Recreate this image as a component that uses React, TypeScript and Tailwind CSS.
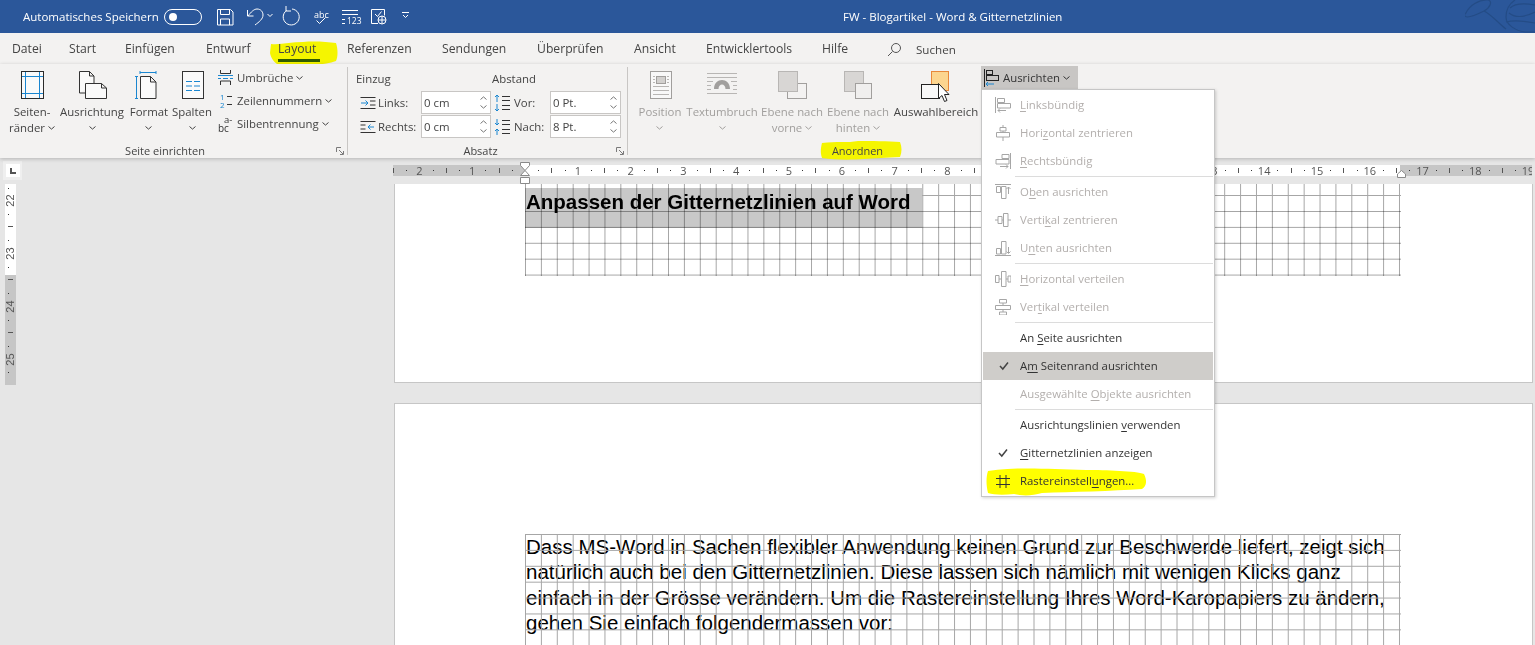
import type { ReactNode } from 'react';

const ui = 'font-["Open_Sans","Noto_Sans",sans-serif]';

function Chevron({ className = '' }: { className?: string }) {
  return (
    <svg className={`inline-block h-[4px] w-[7px] shrink-0 ${className}`} viewBox="0 0 7 4" fill="none" stroke="currentColor" strokeWidth="1">
      <path d="M.5.5l3 2.6 3-2.6" />
    </svg>
  );
}

/* ---------- title bar icons ---------- */
function QuickIcons() {
  return (
    <svg className="ml-[15px] h-[33px] w-[200px] shrink-0" viewBox="0 0 200 33" fill="none" stroke="#fff" strokeWidth="1">
      <path d="M.5 9.500h13l2.500 2.500v13H.5zM3.500 9.500v5h9v-5M3.500 25v-6h9v6" />
      <path d="M30.500 10v6h6M31 16c3-4 6-7 9-7 4 0 6 3 6 6 0 4-4 7-8 10" />
      <path d="M50.500 14l2.500 2.500 2.500-2.500" />
      <path d="M69.500 10.500A8 8 0 1 0 75 9M69 6v5h5" />
      <text x="97" y="17.500" fill="#fff" stroke="none" fontSize="9" fontFamily="Open Sans">abc</text>
      <path d="M99.500 20.500l3 3 6-6" />
      <path d="M125 10.500h16M125 14.500h16M125 19.500h3M125 23.500h3" />
      <text x="130" y="24" fill="#fff" stroke="none" fontSize="8.500" fontFamily="Open Sans">123</text>
      <path d="M161 23.500h-6.500v-14h13v6M158 14l2.500 2.500 4-5" />
      <circle cx="165" cy="20" r="4" fill="#2b579a" />
      <path d="M161 20h8M165 16v8" />
      <path d="M185 12.500h7M186 15l2.500 2.500 2.500-2.500" />
    </svg>
  );
}

function Scribble() {
  return (
    <svg className="absolute right-0 top-0 h-[33px] w-[70px]" viewBox="0 0 70 33" fill="none" stroke="#244c86" strokeWidth="1.200">
      <path d="M1 13c3-7 13-14 22-13 5 1 2 8-4 11-8 4-17 8-19 5-1-2 0-2 1-3M19 11c8 4 14 12 22 18" />
      <path d="M50 0c-6 4-9 10-9 17 0 8 10 14 19 15h10M45 8c5-5 14-5 25-3M44 13c6 5 16 4 26-1M41 22c8-2 18-1 29 1" />
    </svg>
  );
}

/* ---------- ribbon icons ---------- */
function MarginIcon() {
  return (
    <svg className="h-[28px] w-[23px]" viewBox="0 0 23 28" fill="none">
      <rect x=".5" y=".5" width="22" height="27" fill="#fafafa" stroke="#2b2b2b" />
      <path d="M4.500 1v26M18.500 1v26M1 5.500h21M1 22.500h21" stroke="#1a86d0" />
    </svg>
  );
}

function OrientationIcon() {
  return (
    <svg className="ml-[2px] h-[28px] w-[28px]" viewBox="0 0 28 28" fill="none" stroke="#333">
      <path d="M.5 22V.5h10l4.500 4.500V12M10.500.5v4.500H15M.5 22h6" fill="#fafafa" />
      <path d="M6.500 12.500h16l5 4.500v10.500h-21zM22.500 12.500v4.500h5" fill="#fafafa" />
    </svg>
  );
}

function SizeIcon() {
  return (
    <svg className="mr-[6px] h-[28px] w-[22px]" viewBox="0 0 22 28" fill="none">
      <path d="M5 1.500h16M5 0v3M21 0v3M1.500 5v23M0 5.500h3M0 27.500h3" stroke="#1a86d0" />
      <path d="M5.500 5.500h10l5.500 5.500v16.500h-15.500zM15.500 5.500v5.500h5.500" fill="#fafafa" stroke="#333" />
    </svg>
  );
}

function ColumnsIcon() {
  return (
    <svg className="ml-[1px] h-[28px] w-[22px]" viewBox="0 0 22 28" fill="none">
      <rect x=".5" y=".5" width="21" height="27" fill="#fafafa" stroke="#333" />
      <path d="M4 10.500h6M12 10.500h6M4 15h6M12 15h6M4 19.500h6M12 19.500h6" stroke="#1a86d0" />
    </svg>
  );
}

function BreaksIcon() {
  return (
    <svg className="h-[15px] w-[15px]" viewBox="0 0 15 15" fill="none">
      <path d="M2.500 0v3.500h10V0M2.500 15v-4h10v4" stroke="#333" />
      <path d="M0 5.500h15M0 8.500h3M5 8.500h5M12 8.500h3" stroke="#1a86d0" />
    </svg>
  );
}

function LineNumbersIcon() {
  return (
    <svg className="h-[17px] w-[15px]" viewBox="0 0 15 17" fill="none">
      <text x="2" y="8" fontSize="8" fill="#1a86d0" fontFamily="Open Sans">1</text>
      <text x="2" y="16" fontSize="8" fill="#1a86d0" fontFamily="Open Sans">2</text>
      <path d="M9 4.500h5M9 12.500h5" stroke="#333" />
    </svg>
  );
}

function HyphenIcon() {
  return (
    <svg className="h-[18px] w-[15px]" viewBox="0 0 15 18" fill="none">
      <text x="6" y="8" fontSize="9.500" fill="#333" fontFamily="Open Sans">a-</text>
      <text x="0" y="17" fontSize="10" fill="#333" fontFamily="Open Sans">bc</text>
    </svg>
  );
}

function IndentIcon({ right = false }: { right?: boolean }) {
  return (
    <svg className="h-[14px] w-[16px]" viewBox="0 0 16 14" fill="none">
      <path d={right ? 'M.5 1.500h15M.5 5h5M.5 9h5M.5 12.500h15' : 'M.5 1.500h15M10 5h5.500M10 9h5.500M.5 12.500h15'} stroke="#333" />
      <path d={right ? 'M14 7H8M10.500 4.500L8 7l2.500 2.500' : 'M1 7h7M5.500 4.500L8 7l-2.500 2.500'} stroke="#1a86d0" />
    </svg>
  );
}

function SpacingIcon({ after = false }: { after?: boolean }) {
  return (
    <svg className="h-[16px] w-[16px]" viewBox="0 0 16 16" fill="none">
      <path d="M8 1.500h8M8 5.500h8M8 10.500h8M8 14.500h8" stroke="#333" />
      <path d={after ? 'M3 0v6M1 4l2 2 2-2M3 16v-6M1 12l2-2 2 2' : 'M3 7V0M1 2l2-2 2 2M3 9v7M1 14l2 2 2-2'} stroke="#1a86d0" />
    </svg>
  );
}

function PositionIcon() {
  return (
    <svg className="ml-[2px] h-[28px] w-[22px]" viewBox="0 0 22 28" fill="none" stroke="#a19f9d">
      <rect x=".5" y=".5" width="21" height="27" fill="#f8f8f8" />
      <rect x="6.500" y="5.500" width="9" height="7" fill="#d2d0ce" />
      <path d="M3 5.500h2M3 8.500h2M3 11.500h2M17 5.500h2M17 8.500h2M17 11.500h2M3 15.500h16M3 19.500h16M3 23.500h16" stroke="#b8b6b4" />
    </svg>
  );
}

function WrapIcon() {
  return (
    <svg className="h-[28px] w-[30px]" viewBox="0 0 30 28" fill="none">
      <path d="M0 2.500h30M0 6.500h30M0 10.500h6M24 10.500h6M0 14.500h4M26 14.500h4M0 18.500h4M26 18.500h4M0 22.500h30" stroke="#b8b6b4" />
      <path d="M7 18c0-12 16-12 16 0h-4.500c0-6-7-6-7 0z" fill="#a19f9d" />
    </svg>
  );
}

function ForwardIcon() {
  return (
    <svg className="h-[28px] w-[29px]" viewBox="0 0 29 28" fill="none">
      <rect x="9.500" y="12.500" width="19" height="15" fill="#f3f2f1" stroke="#a19f9d" />
      <rect x=".5" y=".5" width="19" height="20" fill="#d8d6d4" stroke="#b8b6b4" />
    </svg>
  );
}

function BackwardIcon() {
  return (
    <svg className="h-[28px] w-[29px]" viewBox="0 0 29 28" fill="none">
      <rect x=".5" y=".5" width="19" height="20" fill="#d8d6d4" stroke="#b8b6b4" />
      <rect x="11.500" y="12.500" width="16" height="15" fill="#f0efee" stroke="#a19f9d" />
    </svg>
  );
}

function SelectionIcon() {
  return (
    <svg className="h-[31px] w-[31px]" viewBox="0 0 31 31" fill="none">
      <rect x="10.500" y=".5" width="17" height="19" fill="#fcd58f" stroke="#e8883a" />
      <rect x=".5" y="13.500" width="18" height="14" fill="#f8f8f8" stroke="#222" />
      <path d="M17.500 12.500v15l3.500-3 2.500 6 2.500-1-2.500-6h4.500z" fill="#fff" stroke="#222" />
    </svg>
  );
}

function AlignSmallIcon() {
  return (
    <svg className="h-[18px] w-[16px] shrink-0" viewBox="0 0 16 18" fill="none">
      <path d="M.5 0v18" stroke="#222" />
      <rect x="2.500" y="1.500" width="6" height="4" stroke="#222" />
      <rect x="2.500" y="6.500" width="12" height="5" stroke="#222" />
      <path d="M2 15h8M4 13l-2 2 2 2" stroke="#1a86d0" />
    </svg>
  );
}

function DialogLauncher({ className }: { className: string }) {
  return (
    <svg className={`absolute h-[8px] w-[8px] ${className}`} viewBox="0 0 8 8" fill="none" stroke="#7a7a7a">
      <path d="M.5 5V.5H5M3 3l4 4M7.500 4v3.500H4" />
    </svg>
  );
}

/* ---------- menu icons ---------- */
const menuIcons: Record<string, ReactNode> = {
  left: <path d="M.5 0v16M2.500 1.500h7v4h-7zM2.500 6.500h13v4.500h-13zM3 13.500h8M5 11.500l-2 2 2 2" />,
  hcenter: <path d="M8 0v2M8 6v1M8 12v4M5 2.500h6v3.500h-6zM1.500 7.500h13v4.500h-13z" />,
  right: <path d="M15.500 0v16M7 1.500h7v4h-7zM1 6.500h13v4.500h-13zM5 13.500h8M11 11.500l2 2-2 2" />,
  top: <path d="M0 .5h16M1.500 2.500h4v6h-4zM6.500 2.500h4.500v12h-4.500zM13.500 10v-7M11.500 5l2-2 2 2" />,
  vcenter: <path d="M0 8h3M7 8h1M13 8h3M3 4.500h4v7h-4zM8.500 1.500h4.500v13h-4.500z" />,
  bottom: <path d="M0 15.500h16M1.500 8.500h4v5.500h-4zM6.500 1.500h4.500v12.500h-4.500zM13.500 7v6M11.500 11.500l2 2 2-2" />,
  hdist: <path d="M.5 4.500h3.500v7h-3.500zM6.500 .5h4.500v15h-4.500zM13 5h3v6h-3zM4 8h2.500M11 8h2" />,
  vdist: <path d="M4.500 .5h7v3.500h-7zM.5 6.500h15v4h-15zM4.500 13h7v3h-7zM8 4v2.500M8 10.500v2.500" />,
};

type MenuEntry = {
  pre: string;
  u: string;
  post: string;
  off?: boolean;
  icon?: string;
  check?: boolean;
  active?: boolean;
  sep?: boolean;
};

const menu: MenuEntry[] = [
  { pre: '', u: 'L', post: 'inksbündig', off: true, icon: 'left' },
  { pre: 'Hori', u: 'z', post: 'ontal zentrieren', off: true, icon: 'hcenter' },
  { pre: '', u: 'R', post: 'echtsbündig', off: true, icon: 'right', sep: true },
  { pre: 'O', u: 'b', post: 'en ausrichten', off: true, icon: 'top' },
  { pre: 'Verti', u: 'k', post: 'al zentrieren', off: true, icon: 'vcenter' },
  { pre: 'U', u: 'n', post: 'ten ausrichten', off: true, icon: 'bottom', sep: true },
  { pre: '', u: 'H', post: 'orizontal verteilen', off: true, icon: 'hdist' },
  { pre: 'Ver', u: 't', post: 'ikal verteilen', off: true, icon: 'vdist', sep: true },
  { pre: 'An ', u: 'S', post: 'eite ausrichten' },
  { pre: 'A', u: 'm', post: ' Seitenrand ausrichten', check: true, active: true },
  { pre: 'Ausgewählte ', u: 'O', post: 'bjekte ausrichten', off: true, sep: true },
  { pre: 'Ausrichtungslinien ', u: 'v', post: 'erwenden' },
  { pre: '', u: 'G', post: 'itternetzlinien anzeigen', check: true },
  { pre: 'Rastereinstell', u: 'u', post: 'ngen...', icon: 'grid' },
];

function MenuIcon({ entry }: { entry: MenuEntry }) {
  if (entry.check) {
    return (
      <svg className="ml-[16px] h-[10px] w-[10px]" viewBox="0 0 10 10" fill="none" stroke="#444" strokeWidth="1.500">
        <path d="M1 5l2.800 3L9 1.500" />
      </svg>
    );
  }
  if (entry.icon === 'grid') {
    return (
      <svg className="ml-[14px] h-[13px] w-[14px]" viewBox="0 0 14 13" fill="none" stroke="#333">
        <path d="M4 0v13M10 0v13M0 3.500h14M0 9.500h14" />
      </svg>
    );
  }
  if (entry.icon) {
    return (
      <svg className="ml-[13px] h-[16px] w-[16px]" viewBox="0 0 16 16" fill="none" stroke="#a6a6a6">
        {menuIcons[entry.icon]}
      </svg>
    );
  }
  return null;
}

function AlignMenu() {
  return (
    <div className={`absolute left-[981px] top-[89px] z-20 w-[234px] border border-[#c6c6c6] bg-white py-px text-[11.400px] leading-none shadow-[1px_1px_3px_rgba(0,0,0,0.18)] ${ui}`}>
      <svg className="absolute left-[4px] top-[377px] h-[30px] w-[162px]" viewBox="0 0 162 30" preserveAspectRatio="none">
        <path d="M2 4C30 0 60 2 100 3c20 0 50 1 58 4 3 6 3 12-2 15-30 2-70 3-100 4-10 3-20 3-28 1-10 1-20 1-26-1C0 18 0 10 2 4z" fill="#ffff00" />
      </svg>
      {menu.map((item) => (
        <div key={item.pre + item.u + item.post}>
          <div className={`relative flex h-[28px] items-center ${item.active ? 'mx-px bg-[#cfcdca]' : ''} ${item.off ? 'text-[#b3afad]' : 'text-[#333]'}`}>
            <div className={`flex shrink-0 items-center ${item.active ? 'w-[37px]' : 'w-[38px]'}`}>
              <MenuIcon entry={item} />
            </div>
            <span className="whitespace-pre">
              {item.pre}
              <u className="underline-offset-2">{item.u}</u>
              {item.post}
            </span>
          </div>
          {item.sep && <div className="my-px ml-[33px] mr-px h-px bg-[#dcdcdc]" />}
        </div>
      ))}
    </div>
  );
}

/* ---------- ribbon parts ---------- */
function BigButton({ icon, lines, w, off, chevron, className = '' }: { icon: ReactNode; lines: string[]; w: string; off?: boolean; chevron?: boolean; className?: string }) {
  return (
    <div className={`flex shrink-0 flex-col items-center ${w} ${className} ${off ? 'text-[#a19f9d]' : 'text-[#444]'}`}>
      <div className="mt-[4px] flex h-[28px] items-start justify-center">{icon}</div>
      <div className="mt-[5px] whitespace-nowrap text-center text-[11.400px] leading-[16px]">
        {lines.map((line, i) => (
          <div key={line} className="flex h-[16px] items-center justify-center gap-[3px]">
            {line}
            {chevron && lines.length > 1 && i === lines.length - 1 && <Chevron />}
          </div>
        ))}
        {lines.length === 1 && chevron && (
          <div className="flex h-[16px] items-center justify-center">
            <Chevron />
          </div>
        )}
      </div>
    </div>
  );
}

function SmallButton({ icon, label }: { icon: ReactNode; label: string }) {
  return (
    <div className="flex h-[23px] items-center text-[11.400px] text-[#444]">
      <div className="flex w-[19px] shrink-0 items-center">{icon}</div>
      <span className="whitespace-nowrap">{label}</span>
      <Chevron className="ml-[3px]" />
    </div>
  );
}

function Spinner({ value, w }: { value: string; w: string }) {
  return (
    <div className={`flex h-[23px] shrink-0 items-center justify-between border border-[#c8c6c4] bg-white pl-[2px] pr-[3px] text-[11.400px] text-[#444] ${w}`}>
      <span>{value}</span>
      <div className="flex flex-col gap-[5px] text-[#777]">
        <Chevron className="rotate-180" />
        <Chevron />
      </div>
    </div>
  );
}

function GroupLabel({ children, className = '' }: { children: ReactNode; className?: string }) {
  return <div className={`absolute bottom-[-1px] left-0 right-0 text-center text-[11px] leading-[16px] text-[#444] ${className}`}>{children}</div>;
}

function Separator() {
  return <div className="h-[88px] w-px shrink-0 bg-[#c8c6c4]" />;
}

const tabs: [string, string][] = [
  ['Datei', 'w-[57px]'],
  ['Start', 'w-[56px]'],
  ['Einfügen', 'w-[81px]'],
  ['Entwurf', 'w-[72px]'],
  ['Layout', 'w-[69px]'],
  ['Referenzen', 'w-[95px]'],
  ['Sendungen', 'w-[95px]'],
  ['Überprüfen', 'w-[97px]'],
  ['Ansicht', 'w-[72px]'],
  ['Entwicklertools', 'w-[116px]'],
  ['Hilfe', 'w-[65px]'],
];

function Tabs() {
  return (
    <div className="relative flex h-[31px] items-center bg-[#f3f2f1] pl-[12px] pt-[2px] text-[12.200px] text-[#444]">
      <svg className="absolute left-[268px] top-[8px] h-[27px] w-[70px]" viewBox="0 0 70 27" preserveAspectRatio="none">
        <path d="M3 3c10 1 20-2 32-2 12-1 24 0 33 1 2 6 2 14 0 18-8 3-18 4-28 3-8 2-16 3-24 2C8 25 3 18 2 12z" fill="#f5f500" />
      </svg>
      {tabs.map(([name, w]) => (
        <div key={name} className={`relative shrink-0 whitespace-nowrap ${w}`}>
          {name}
          {name === 'Layout' && <div className="absolute left-0 top-[19px] h-[3px] w-[42px] bg-[#2f5b00]" />}
        </div>
      ))}
      <svg className="h-[15px] w-[15px] shrink-0" viewBox="0 0 15 15" fill="none" stroke="#555">
        <circle cx="9" cy="6" r="4.500" />
        <path d="M5.500 9.500L1 14" />
      </svg>
      <span className="ml-[14px] text-[11.600px]">Suchen</span>
    </div>
  );
}

function Ribbon() {
  return (
    <div className="relative z-10 flex h-[94px] bg-[#f3f2f1] pt-[3px] shadow-[0_1px_4px_rgba(0,0,0,0.22)]">
      <div className="relative flex h-[91px] w-[347px] shrink-0 pl-[2px]">
        <BigButton icon={<MarginIcon />} lines={['Seiten-', 'ränder']} w="w-[60px]" chevron />
        <BigButton icon={<OrientationIcon />} lines={['Ausrichtung']} w="w-[60px]" chevron />
        <BigButton icon={<SizeIcon />} lines={['Format']} w="w-[54px]" chevron />
        <BigButton icon={<ColumnsIcon />} lines={['Spalten']} w="w-[32px]" chevron />
        <div className="-mt-px ml-[10px] flex flex-col">
          <SmallButton icon={<BreaksIcon />} label="Umbrüche" />
          <SmallButton icon={<LineNumbersIcon />} label="Zeilennummern" />
          <SmallButton icon={<HyphenIcon />} label="Silbentrennung" />
        </div>
        <GroupLabel className="pr-[17px]">Seite einrichten</GroupLabel>
        <DialogLauncher className="bottom-[3px] right-[3px]" />
      </div>
      <Separator />
      <div className="relative flex h-[91px] w-[279px] shrink-0 flex-col pl-[8px] text-[11.400px] text-[#444]">
        <div className="flex h-[24px] items-center">
          <span className="w-[136px]">Einzug</span>
          <span>Abstand</span>
        </div>
        <div className="flex h-[24px] items-start">
          <div className="ml-[4px] flex h-[23px] w-[18px] shrink-0 items-center"><IndentIcon /></div>
          <div className="flex h-[23px] w-[43px] shrink-0 items-center">Links:</div>
          <Spinner value="0 cm" w="w-[70px]" />
          <div className="ml-[3px] flex h-[23px] w-[20px] shrink-0 items-center"><SpacingIcon /></div>
          <div className="flex h-[23px] w-[36px] shrink-0 items-center">Vor:</div>
          <Spinner value="0 Pt." w="w-[71px]" />
        </div>
        <div className="flex h-[24px] items-start">
          <div className="ml-[4px] flex h-[23px] w-[18px] shrink-0 items-center"><IndentIcon right /></div>
          <div className="flex h-[23px] w-[43px] shrink-0 items-center">Rechts:</div>
          <Spinner value="0 cm" w="w-[70px]" />
          <div className="ml-[3px] flex h-[23px] w-[20px] shrink-0 items-center"><SpacingIcon after /></div>
          <div className="flex h-[23px] w-[36px] shrink-0 items-center">Nach:</div>
          <Spinner value="8 Pt." w="w-[71px]" />
        </div>
        <GroupLabel className="pr-[14px]">Absatz</GroupLabel>
        <DialogLauncher className="bottom-[3px] right-[3px]" />
      </div>
      <Separator />
      <div className="relative flex h-[91px] w-[459px] shrink-0">
        <svg className="absolute left-[192px] top-[73px] h-[20px] w-[82px]" viewBox="0 0 82 20" preserveAspectRatio="none">
          <path d="M2 3c14-2 26 0 36-2 14 0 30 0 42 1 2 5 2 10 0 15-14 1-24 1-36 2-12 1-30 1-42-1C0 12 1 7 2 3z" fill="#f5f500" />
        </svg>
        <BigButton icon={<PositionIcon />} lines={['Position']} w="w-[64px]" off chevron />
        <BigButton icon={<WrapIcon />} lines={['Textumbruch']} w="w-[60px]" off chevron />
        <BigButton icon={<ForwardIcon />} lines={['Ebene nach', 'vorne']} w="w-[66px]" className="ml-[7px]" off chevron />
        <BigButton icon={<BackwardIcon />} lines={['Ebene nach', 'hinten']} w="w-[66px]" off chevron />
        <BigButton icon={<SelectionIcon />} lines={['Auswahlbereich']} w="w-[90px]" />
        <div className="-mt-px flex h-[23px] w-[97px] shrink-0 items-center bg-[#c8c6c4] pl-[3px] text-[11.400px] text-[#333]">
          <AlignSmallIcon />
          <span className="ml-[3px]">Ausrichten</span>
          <Chevron className="ml-[3px]" />
        </div>
        <div className="ml-[9px] h-[22px] w-px bg-[#c8c6c4]" />
        <GroupLabel>Anordnen</GroupLabel>
      </div>
    </div>
  );
}

/* ---------- rulers ---------- */
const hNumbers = ['2', '1', '', ...Array.from({ length: 19 }, (_, i) => String(i + 1))];
const vNumbers = ['22', '23', '24', '25'];

function RulerCell({ n }: { n: string }) {
  return (
    <div className="relative flex h-[11px] w-[52.800px] shrink-0 items-center justify-center text-[11px] leading-none text-[#555]">
      <span className="absolute left-0 top-[3px] h-[5px] w-px bg-[#555]" />
      <span className="absolute left-1/4 top-[5px] h-px w-px bg-[#333]" />
      <span className="absolute left-3/4 top-[5px] h-px w-px bg-[#333]" />
      {n}
    </div>
  );
}

function TopRuler() {
  return (
    <div className="relative flex h-[26px] bg-[#e6e6e6] pt-[7px]">
      <div className="-mt-[4px] ml-[3px] flex h-[19px] w-[19px] shrink-0 items-center justify-center bg-[#efefef]">
        <div className="flex h-[13px] w-[14px] items-center justify-center bg-white">
          <div className="h-[6px] w-[6px] border-b-2 border-l-2 border-[#555]" />
        </div>
      </div>
      <div className="ml-[371px] flex h-[11px] w-[1139px] shrink-0 overflow-hidden bg-[linear-gradient(90deg,#c6c6c6_132px,#fff_132px,#fff_1007px,#c6c6c6_1007px)]">
        {hNumbers.map((n, i) => (
          <RulerCell key={i} n={n} />
        ))}
      </div>
      <svg className="absolute left-[520px] top-[4px] h-[22px] w-[10px]" viewBox="0 0 10 22" fill="#fff" stroke="#8a8a8a">
        <path d="M.5.5h9v3L5 8.500l4.500 5H.5l4.500-5-4.500-5zM.5 15.500h9v6h-9z" />
      </svg>
      <svg className="absolute left-[1397px] top-[12px] h-[8px] w-[9px]" viewBox="0 0 9 8" fill="#fff" stroke="#8a8a8a">
        <path d="M4.500.5l4 3.500v3.500h-8V4z" />
      </svg>
    </div>
  );
}

function SideRuler() {
  return (
    <div className="ml-[5px] h-[201px] w-[11px] overflow-hidden bg-[linear-gradient(#fff_91px,#c6c6c6_91px)]">
      <div className="-mt-[9.600px] flex flex-col">
        {vNumbers.map((n) => (
          <div key={n} className="relative flex h-[52.800px] items-center justify-center text-[11px] leading-none text-[#555]">
            <span className="absolute left-1/4 top-1/4 h-px w-px bg-[#333]" />
            <span className="absolute left-1/4 top-3/4 h-px w-px bg-[#333]" />
            <span className="absolute bottom-0 left-[3px] h-px w-[5px] bg-[#555]" />
            <span className="-rotate-90">{n}</span>
          </div>
        ))}
      </div>
    </div>
  );
}

/* ---------- document ---------- */
const vLines = 'bg-[linear-gradient(90deg,#a6a6a6_1px,transparent_1px)] bg-[size:15.900px_100%]';
const hLines = 'bg-[linear-gradient(#a6a6a6_1px,transparent_1px)] bg-[size:100%_15.900px]';

function Document() {
  return (
    <div className='flex h-[461px] bg-[#e6e6e6] font-["Liberation_Sans",Arial,sans-serif]'>
      <div className="w-[394px] shrink-0">
        <SideRuler />
      </div>
      <div className="w-[1139px] shrink-0">
        <div className="relative h-[199px] border-x border-b border-[#c6c6c6] bg-white pl-[130px] pt-[4px]">
          <div className="h-[40px] w-[397px] bg-[#c8c8c8] pl-px pt-px text-[20.500px] font-bold leading-[26px] text-black">
            Anpassen der Gitternetzlinien auf Word
          </div>
          <div className={`absolute left-[130px] top-0 h-[92px] w-[876px] mix-blend-multiply ${vLines}`} />
          <div className={`absolute left-[130px] top-[27px] h-[65px] w-[876px] mix-blend-multiply ${hLines}`} />
          <div className="absolute left-[527px] top-[11px] h-px w-[479px] bg-[#a6a6a6]" />
        </div>
        <div className="relative mt-[20px] h-[242px] border-x border-t border-[#c6c6c6] bg-white pl-[131px] pt-[130px] text-[20.500px] leading-[25.400px] text-black">
          <p className="w-[875px]">
            Dass MS-Word in Sachen flexibler Anwendung keinen Grund zur Beschwerde liefert, zeigt sich natürlich auch bei den Gitternetzlinien. Diese lassen sich nämlich mit wenigen Klicks ganz einfach in der Grösse verändern. Um die Rastereinstellung Ihres Word-Karopapiers zu ändern, gehen Sie einfach folgendermassen vor:
          </p>
          <div className={`absolute left-[130px] top-[130px] h-[112px] w-[876px] ${vLines}`} />
          <div className={`absolute left-[130px] top-[130px] h-[112px] w-[876px] ${hLines}`} />
        </div>
      </div>
    </div>
  );
}

export default function App() {
  return (
    <div className={`relative h-[645px] w-[1535px] overflow-hidden bg-[#e6e6e6] ${ui}`}>
      <div className="relative flex h-[33px] items-center bg-[#2b579a] pl-[23px] text-[11.500px] text-white">
        <span className="w-[141px] shrink-0 whitespace-nowrap">Automatisches Speichern</span>
        <div className="flex h-[16px] w-[38px] shrink-0 items-center rounded-full border border-white pl-[4px]">
          <div className="h-[8px] w-[8px] rounded-full bg-white" />
        </div>
        <QuickIcons />
        <span className="ml-[426px] whitespace-nowrap">FW - Blogartikel - Word &amp; Gitternetzlinien</span>
        <Scribble />
      </div>
      <Tabs />
      <Ribbon />
      <TopRuler />
      <Document />
      <AlignMenu />
    </div>
  );
}
